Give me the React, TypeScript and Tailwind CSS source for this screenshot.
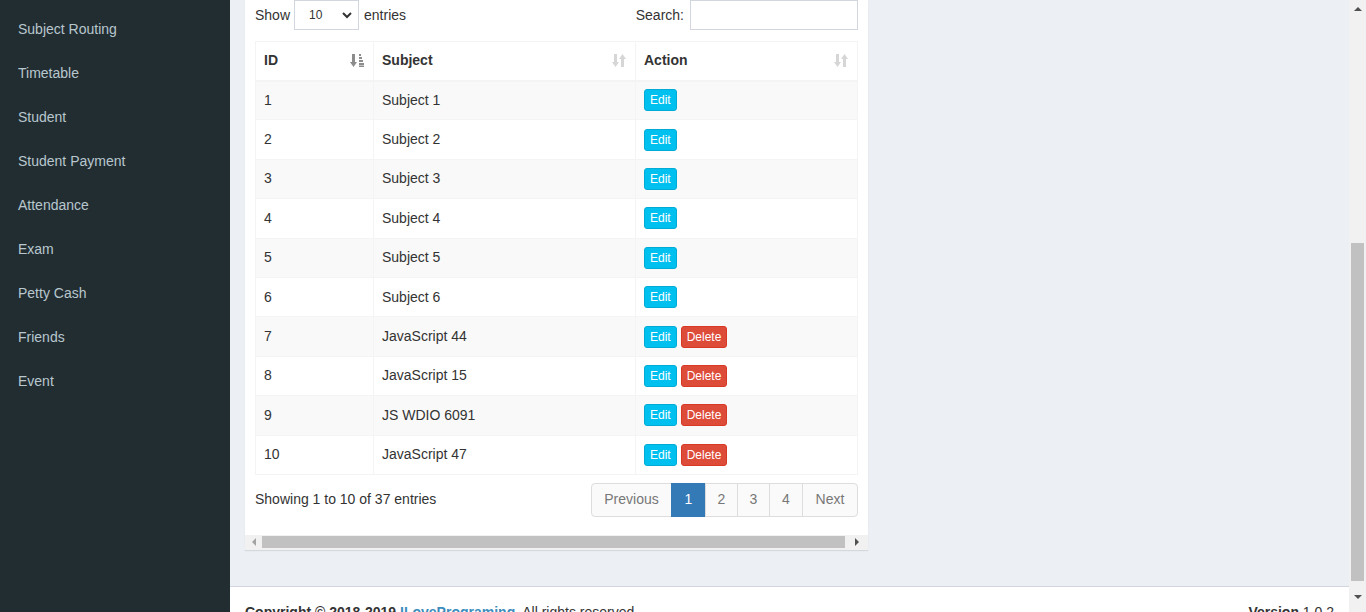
import React from "react";

const font = { fontFamily: '"Liberation Sans", Arial, sans-serif' };

const menu = [
  "Subject Routing",
  "Timetable",
  "Student",
  "Student Payment",
  "Attendance",
  "Exam",
  "Petty Cash",
  "Friends",
  "Event",
];

const rows: [string, string, boolean][] = [
  ["1", "Subject 1", false],
  ["2", "Subject 2", false],
  ["3", "Subject 3", false],
  ["4", "Subject 4", false],
  ["5", "Subject 5", false],
  ["6", "Subject 6", false],
  ["7", "JavaScript 44", true],
  ["8", "JavaScript 15", true],
  ["9", "JS WDIO 6091", true],
  ["10", "JavaScript 47", true],
];

function SortAsc() {
  return (
    <svg width="15" height="15" viewBox="0 0 15 15" className="shrink-0">
      <g fill="#8c8c8c">
        <rect x="2" y="1" width="3" height="9" />
        <polygon points="0,9 7,9 3.5,14" />
        <rect x="9" y="1" width="2" height="2" />
        <rect x="9" y="4" width="3" height="2" />
        <rect x="9" y="7" width="4" height="2" />
        <rect x="9" y="10" width="5" height="2" />
        <rect x="9" y="12.5" width="5" height="1.5" />
      </g>
    </svg>
  );
}

function SortBoth() {
  return (
    <svg width="15" height="15" viewBox="0 0 15 15" className="shrink-0">
      <g fill="#d6d6d6">
        <rect x="2" y="1" width="3" height="9" />
        <polygon points="0,9 7,9 3.5,14" />
        <rect x="9" y="5" width="3" height="9" />
        <polygon points="7,6 14,6 10.5,1" />
      </g>
    </svg>
  );
}

const pg = "-ml-px flex items-center justify-center border border-[#ddd] bg-[#fafafa]";

export default function App() {
  return (
    <div className="flex h-[612px] w-[1366px] overflow-hidden text-[14px] text-[#333]" style={font}>
      {/* Sidebar */}
      <aside className="flex w-[230px] shrink-0 flex-col bg-[#222d32] pt-[7px]">
        {menu.map((m) => (
          <div key={m} className="flex h-[44px] items-center pl-[18px] text-[14px] text-[#b8c7ce]">
            {m}
          </div>
        ))}
      </aside>

      {/* Main */}
      <div className="flex min-w-0 flex-1 flex-col bg-[#ecf0f5]">
        <div className="h-[586px] shrink-0 pl-[15px]">
          <div className="w-[623px] bg-white shadow-[0_1px_1px_rgba(0,0,0,0.1)]">
            <div className="px-[10px] pb-[18px]">
              {/* Controls */}
              <div className="flex h-[30px] items-center justify-between">
                <div className="flex items-center">
                  <span>Show</span>
                  <div className="ml-[4px] flex h-[30px] w-[65px] items-center justify-between border border-[#d2d6de] pl-[14px] pr-[5px] text-[12px]">
                    <span>10</span>
                    <svg width="12" height="8" viewBox="0 0 12 8">
                      <path d="M2 2 L6 6 L10 2" fill="none" stroke="#333" strokeWidth="2" />
                    </svg>
                  </div>
                  <span className="ml-[5px]">entries</span>
                </div>
                <div className="flex items-center">
                  <span>Search:</span>
                  <div className="ml-[6px] h-[30px] w-[168px] border border-[#d2d6de]" />
                </div>
              </div>

              {/* Table */}
              <table className="mt-[11px] w-[603px] border-collapse border border-[#f4f4f4]">
                <colgroup>
                  <col className="w-[118px]" />
                  <col className="w-[262px]" />
                  <col />
                </colgroup>
                <thead>
                  <tr className="h-[39px] border-b-2 border-[#f4f4f4]">
                    <th className="border-r border-[#f4f4f4] px-[8px] text-left font-bold">
                      <div className="flex items-center justify-between">
                        <span>ID</span>
                        <SortAsc />
                      </div>
                    </th>
                    <th className="border-r border-[#f4f4f4] px-[8px] text-left font-bold">
                      <div className="flex items-center justify-between">
                        <span>Subject</span>
                        <SortBoth />
                      </div>
                    </th>
                    <th className="px-[8px] text-left font-bold">
                      <div className="flex items-center justify-between">
                        <span>Action</span>
                        <SortBoth />
                      </div>
                    </th>
                  </tr>
                </thead>
                <tbody>
                  {rows.map(([id, name, del], i) => (
                    <tr
                      key={id}
                      className={`h-[39.4px] border-b border-[#f4f4f4] ${i % 2 === 0 ? "bg-[#f9f9f9]" : "bg-white"}`}
                    >
                      <td className="border-r border-[#f4f4f4] px-[8px] align-middle">{id}</td>
                      <td className="border-r border-[#f4f4f4] px-[8px] align-middle">{name}</td>
                      <td className="px-[8px] align-middle">
                        <div className="flex items-center gap-[4px]">
                          <span className="flex h-[22px] items-center rounded-[3px] border border-[#00acd6] bg-[#00c0ef] px-[5px] text-[12px] text-white">
                            Edit
                          </span>
                          {del && (
                            <span className="flex h-[22px] items-center rounded-[3px] border border-[#d73925] bg-[#dd4b39] px-[5px] text-[12px] text-white">
                              Delete
                            </span>
                          )}
                        </div>
                      </td>
                    </tr>
                  ))}
                </tbody>
              </table>

              {/* Info + pagination */}
              <div className="mt-[8px] flex h-[34px] items-center justify-between">
                <span className="pb-[1px]">Showing 1 to 10 of 37 entries</span>
                <div className="flex h-[34px] text-[#777]">
                  <span className="flex w-[81px] items-center justify-center rounded-l-[4px] border border-[#ddd] bg-[#fafafa]">Previous</span>
                  <span className="-ml-px flex w-[35px] items-center justify-center border border-[#337ab7] bg-[#337ab7] text-white">1</span>
                  <span className={`${pg} w-[33px]`}>2</span>
                  <span className={`${pg} w-[33px]`}>3</span>
                  <span className={`${pg} w-[34px]`}>4</span>
                  <span className={`${pg} w-[56px] rounded-r-[4px]`}>Next</span>
                </div>
              </div>
            </div>

            {/* Horizontal scrollbar */}
            <div className="flex h-[15px] items-center bg-[#f1f1f1]">
              <div className="flex w-[17px] justify-center">
                <svg width="6" height="8" viewBox="0 0 6 8">
                  <polygon points="5,0 5,8 1,4" fill="#a3a3a3" />
                </svg>
              </div>
              <div className="h-[12px] w-[583px] bg-[#c1c1c1]" />
              <div className="flex flex-1 justify-center">
                <svg width="6" height="8" viewBox="0 0 6 8">
                  <polygon points="1,0 1,8 5,4" fill="#505050" />
                </svg>
              </div>
            </div>
          </div>
        </div>

        {/* Footer */}
        <footer className="flex flex-1 justify-between border-t border-[#d2d6de] bg-white px-[15px] pt-[15px]">
          <div>
            <b>Copyright © 2018-2019 </b>
            <b className="text-[#3c8dbc]">ILovePrograming</b>
            <b>.</b> All rights reserved.
          </div>
          <div>
            <b>Version</b> 1.0.2
          </div>
        </footer>
      </div>

      {/* Vertical scrollbar */}
      <div className="flex w-[17px] shrink-0 flex-col items-center bg-[#f1f1f1]">
        <div className="flex h-[17px] items-center justify-center">
          <svg width="8" height="6" viewBox="0 0 8 6">
            <polygon points="0,5 8,5 4,1" fill="#505050" />
          </svg>
        </div>
        <div className="mt-[226px] h-[338px] w-[13px] bg-[#c1c1c1]" />
        <div className="flex flex-1 items-center justify-center">
          <svg width="8" height="6" viewBox="0 0 8 6">
            <polygon points="0,1 8,1 4,5" fill="#505050" />
          </svg>
        </div>
      </div>
    </div>
  );
}
